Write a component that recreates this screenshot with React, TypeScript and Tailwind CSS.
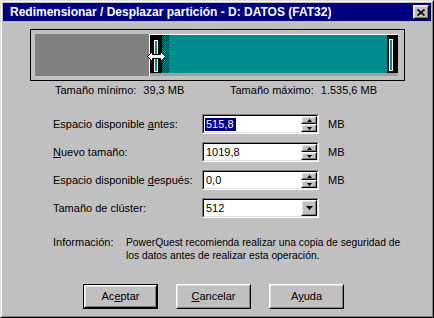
import React from 'react';

const TEAL = '#008c8c';

function Sunken({ children, className = '' }: { children: React.ReactNode; className?: string }) {
  return (
    <div className={`flex border border-t-[#808080] border-l-[#808080] border-r-white border-b-white ${className}`}>
      <div className="flex flex-1 min-w-0 border border-t-black border-l-black border-r-[#dfdfdf] border-b-[#dfdfdf] bg-white">
        {children}
      </div>
    </div>
  );
}

function Raised({ children, className = '' }: { children?: React.ReactNode; className?: string }) {
  return (
    <div className={`flex border border-t-white border-l-white border-r-black border-b-black bg-[#c0c0c0] ${className}`}>
      <div className="flex flex-1 items-center justify-center border border-t-[#dfdfdf] border-l-[#dfdfdf] border-r-[#808080] border-b-[#808080]">
        {children}
      </div>
    </div>
  );
}

function SpinButtons() {
  return (
    <div className="flex w-[16px] flex-col">
      <Raised className="h-[8px]">
        <svg width="5" height="3" viewBox="0 0 5 3"><path d="M2.5 0 L5 3 L0 3 Z" fill="black" /></svg>
      </Raised>
      <Raised className="h-[8px]">
        <svg width="5" height="3" viewBox="0 0 5 3"><path d="M0 0 L5 0 L2.5 3 Z" fill="black" /></svg>
      </Raised>
    </div>
  );
}

function SpinField({ value, selected }: { value: string; selected?: boolean }) {
  return (
    <Sunken className="h-[20px] w-[117px]">
      <div className="flex flex-1 items-center pl-[1px]">
        {selected ? (
          <span className="flex items-center">
            <span className="bg-[#000080] px-[1px] leading-[13px] text-white">{value}</span>
            <span className="h-[13px] w-px bg-black" />
          </span>
        ) : (
          <span className="pl-[1px] leading-[13px]">{value}</span>
        )}
      </div>
      <SpinButtons />
    </Sunken>
  );
}

function Row({ label, children, unit }: { label: React.ReactNode; children: React.ReactNode; unit?: string }) {
  return (
    <div className="flex h-[20px] items-center">
      <span className="w-[149px]">{label}</span>
      {children}
      {unit && <span className="ml-[9px]">{unit}</span>}
    </div>
  );
}

function Checker() {
  return (
    <svg width="7" height="38" className="block">
      <defs>
        <pattern id="chk" width="2" height="2" patternUnits="userSpaceOnUse">
          <rect width="2" height="2" fill={TEAL} />
          <rect width="1" height="1" fill="black" />
          <rect x="1" y="1" width="1" height="1" fill="black" />
        </pattern>
      </defs>
      <rect width="7" height="38" fill="url(#chk)" />
    </svg>
  );
}

function Button({ children, isDefault }: { children: React.ReactNode; isDefault?: boolean }) {
  if (isDefault) {
    return (
      <div className="flex h-[25px] w-[75px] border border-black">
        <Raised className="flex-1">{children}</Raised>
      </div>
    );
  }
  return <Raised className="h-[25px] w-[75px]">{children}</Raised>;
}

export default function App() {
  return (
    <div className="h-[318px] w-[434px] border border-t-[#dfdfdf] border-l-[#dfdfdf] border-r-black border-b-black bg-[#c0c0c0] font-['Liberation_Sans',Arial,sans-serif] text-[11px] text-black">
      <div className="flex h-full flex-col border border-t-white border-l-white border-r-[#808080] border-b-[#808080] p-px">
        {/* title bar */}
        <div className="flex h-[18px] items-center bg-[#000080] pl-[7px] pr-[2px]">
          <span className="flex-1 text-[12px] font-bold leading-none text-white">
            Redimensionar / Desplazar partición - D: DATOS (FAT32)
          </span>
          <Raised className="h-[14px] w-[16px]">
            <svg width="8" height="7" viewBox="0 0 8 7">
              <path d="M0.5 0.5 L7.5 6.5 M7.5 0.5 L0.5 6.5" stroke="black" strokeWidth="1.6" />
            </svg>
          </Raised>
        </div>

        <div className="flex flex-col pl-[27px]">
          {/* partition bar */}
          <div className="relative mt-[8px] flex h-[52px] w-[375px] border border-black bg-[#c0c0c0] pt-[4px] pb-[4px] pl-[4px] pr-[6px]">
            <div className="flex h-[42px] w-[363px]">
              <div className="w-[114px] bg-[#808080]" />
              <div className="flex w-[249px] flex-col border-l border-t border-white bg-black">
                <div className="flex h-[38px]">
                  <div className="flex w-[12px] justify-center pt-[5px]">
                    <div className="h-[32px] w-[4px] border border-white" style={{ background: TEAL }} />
                  </div>
                  <Checker />
                  <div className="w-[218px]" style={{ background: TEAL }} />
                  <div className="flex w-[11px] pl-[2px] pt-[4px]">
                    <div className="h-[32px] w-[4px] border border-white" style={{ background: TEAL }} />
                  </div>
                </div>
                <div className="h-[3px] bg-[#a0a0a0]" />
              </div>
            </div>
            {/* resize cursor */}
            <svg width="19" height="11" viewBox="0 0 19 11" className="absolute left-[116px] top-[21px]">
              <path
                d="M0.5 5.5 L5.5 0.5 L5.5 3.5 L13.5 3.5 L13.5 0.5 L18.5 5.5 L13.5 10.5 L13.5 7.5 L5.5 7.5 L5.5 10.5 Z"
                fill="white"
                stroke="black"
                strokeWidth="1"
              />
            </svg>
          </div>

          <div className="mt-[3px] flex leading-[13px]">
            <span className="ml-[25px] w-[175px]">
              Tamaño mínimo:<span className="ml-[7px]">39,3 MB</span>
            </span>
            <span>
              Tamaño máximo:<span className="ml-[7px]">1.535,6 MB</span>
            </span>
          </div>

          {/* fields */}
          <div className="ml-[23px] mt-[17px] flex flex-col gap-[8px]">
            <Row label={<>Espacio disponible <u>a</u>ntes:</>} unit="MB">
              <SpinField value="515,8" selected />
            </Row>
            <Row label={<><u>N</u>uevo tamaño:</>} unit="MB">
              <SpinField value="1019,8" />
            </Row>
            <Row label={<>Espacio disponible <u>d</u>espués:</>} unit="MB">
              <SpinField value="0,0" />
            </Row>
            <Row label="Tamaño de clúster:">
              <Sunken className="h-[20px] w-[117px]">
                <div className="flex flex-1 items-center pl-[2px] leading-[13px]">512</div>
                <Raised className="w-[16px]">
                  <svg width="7" height="4" viewBox="0 0 7 4"><path d="M0 0 L7 0 L3.5 4 Z" fill="black" /></svg>
                </Raised>
              </Sunken>
            </Row>
          </div>

          {/* info */}
          <div className="ml-[23px] mt-[18px] flex leading-[13px]">
            <span className="w-[73px]">Información:</span>
            <p className="whitespace-nowrap text-[10.3px]">
              PowerQuest recomienda realizar una copia de seguridad de
              <br />
              los datos antes de realizar esta operación.
            </p>
          </div>

          {/* buttons */}
          <div className="ml-[53px] mt-[22px] flex gap-[18px]">
            <Button isDefault>
              Ac<u>e</u>ptar
            </Button>
            <Button>
              <u>C</u>ancelar
            </Button>
            <Button>
              A<u>y</u>uda
            </Button>
          </div>
        </div>
      </div>
    </div>
  );
}
